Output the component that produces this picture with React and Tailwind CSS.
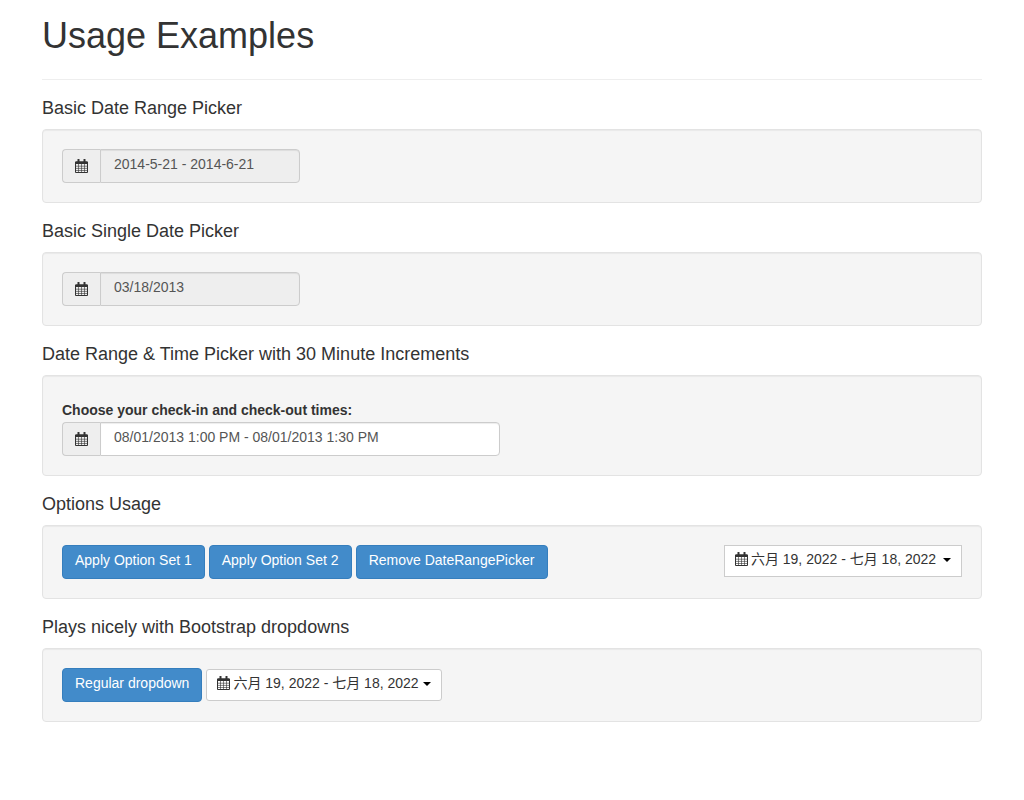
const CalendarIcon = ({ className }) => (
  <svg viewBox="0 0 13 14" className={className} fill="none">
    <path d="M0.5 3H12.5V13.5H0.5Z" stroke="currentColor" />
    <path d="M0.5 2.5H12.5V5H0.5Z" fill="currentColor" />
    <path d="M0.5 7.2H12.5M0.5 9.4H12.5M0.5 11.5H12.5M3.5 5V13.5M6.5 5V13.5M9.5 5V13.5" stroke="currentColor" strokeWidth="0.6" />
    <path d="M3.5 0.5V3.5M9.5 0.5V3.5" stroke="currentColor" strokeWidth="2" strokeLinecap="round" />
  </svg>
);

const Caret = ({ className = "" }) => (
  <span className={`inline-block w-0 h-0 align-middle border-t-4 border-x-4 border-x-transparent border-t-black ${className}`} />
);

const Well = ({ children }) => (
  <div className="bg-[#f5f5f5] border border-[#e3e3e3] rounded p-[19px] mb-[18px] shadow-[inset_0_1px_1px_rgba(0,0,0,0.05)]">
    {children}
  </div>
);

const Heading = ({ children }) => (
  <h4 className="text-[18px] leading-5 mb-[11px] text-[#333]">{children}</h4>
);

const DateInput = ({ value, disabled, width }) => (
  <div className={`flex h-[34px] ${width}`}>
    <span className="w-[38px] shrink-0 flex items-center justify-center bg-[#eee] border border-r-0 border-[#ccc] rounded-l text-[#333]">
      <CalendarIcon className="w-[13px] h-[14px]" />
    </span>
    <div className={`flex-1 border border-[#ccc] rounded-r pl-[13px] pr-3 leading-[28px] text-sm text-[#555] shadow-[inset_0_1px_1px_rgba(0,0,0,0.075)] ${disabled ? "bg-[#eee]" : "bg-white"}`}>
      {value}
    </div>
  </div>
);

const BlueButton = ({ children, className = "" }) => (
  <button className={`h-[34px] px-3 pb-1 bg-[#428bca] border border-[#357ebd] rounded text-sm text-white ${className}`}>
    {children}
  </button>
);

const DateText = () => (
  <>
    <CalendarIcon className="inline-block w-[13px] h-[14px] align-[-2px] mr-[3px]" />
    六月 19, 2022 - 七月 18, 2022
  </>
);

const App = () => {
  return (
    <div className="w-[940px] mx-auto font-['Liberation_Sans','Noto_Sans_CJK_SC',sans-serif] text-sm text-[#333]">
      <div className="pt-[16px] pb-[23px] mb-[18px] border-b border-[#eee]">
        <h1 className="text-[36px] leading-10">Usage Examples</h1>
      </div>

      <Heading>Basic Date Range Picker</Heading>
      <Well>
        <DateInput value="2014-5-21 - 2014-6-21" disabled width="w-[238px]" />
      </Well>

      <Heading>Basic Single Date Picker</Heading>
      <Well>
        <DateInput value="03/18/2013" disabled width="w-[238px]" />
      </Well>

      <Heading>Date Range &amp; Time Picker with 30 Minute Increments</Heading>
      <Well>
        <label className="block font-bold leading-5 mt-[5px] mb-[2px]">Choose your check-in and check-out times:</label>
        <DateInput value="08/01/2013 1:00 PM - 08/01/2013 1:30 PM" width="w-[438px]" />
      </Well>

      <Heading>Options Usage</Heading>
      <Well>
        <div className="flex justify-between items-start">
          <div className="flex gap-1">
            <BlueButton>Apply Option Set 1</BlueButton>
            <BlueButton>Apply Option Set 2</BlueButton>
            <BlueButton className="w-[192px]">Remove DateRangePicker</BlueButton>
          </div>
          <div className="h-8 bg-white border border-[#ccc] px-[10px] pt-[3px] leading-5 whitespace-nowrap">
            <DateText /> <Caret className="ml-[3px]" />
          </div>
        </div>
      </Well>

      <Heading>Plays nicely with Bootstrap dropdowns</Heading>
      <Well>
        <div className="flex gap-1 items-center">
          <BlueButton>Regular dropdown</BlueButton>
          <div className="h-8 bg-white border border-[#ccc] rounded-[3px] px-[10px] pt-[3px] leading-5 whitespace-nowrap">
            <DateText /><Caret className="ml-[4px]" />
          </div>
        </div>
      </Well>
    </div>
  );
};

export default App;
